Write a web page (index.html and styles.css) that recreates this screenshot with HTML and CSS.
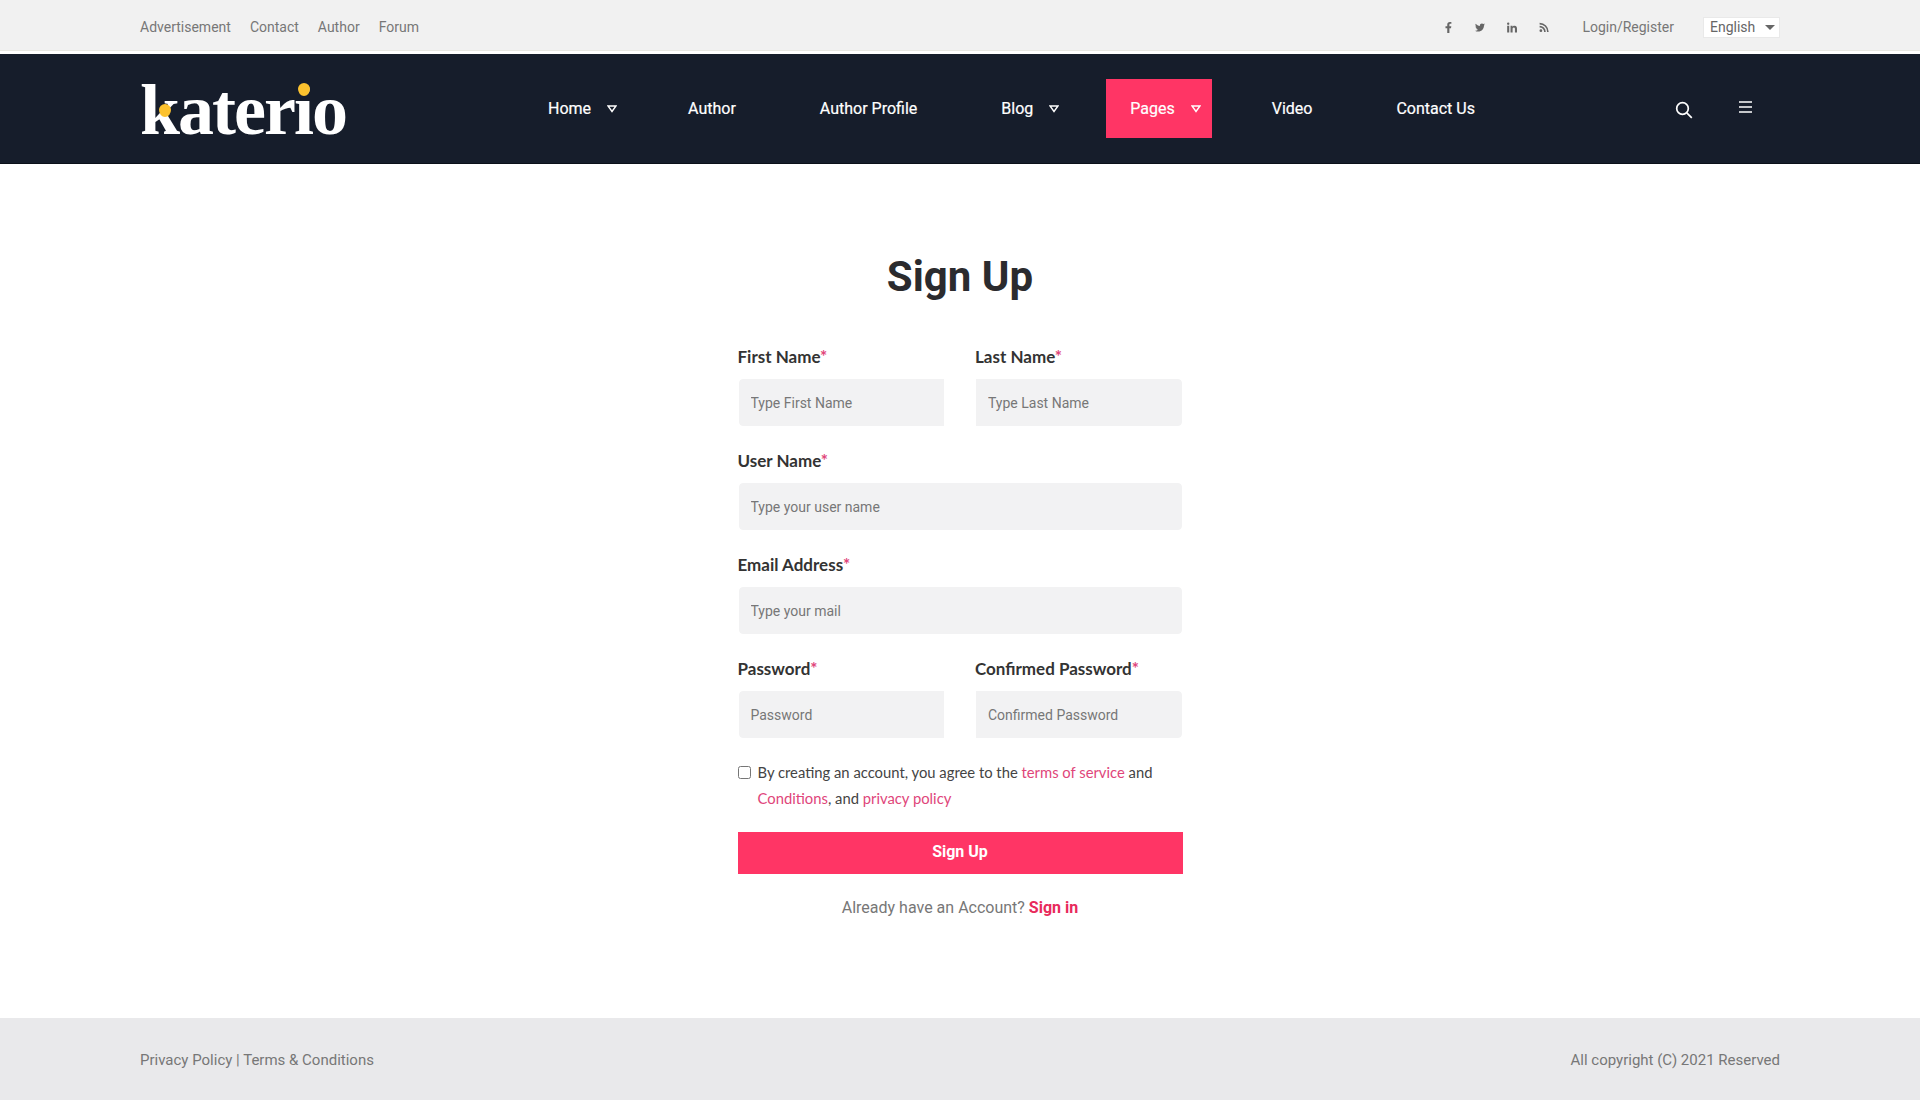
FILE: index.html
```html
<!DOCTYPE html>
<html>
<head>
	<meta charset="utf-8">
	<meta name="viewport" content="width=device-width, initial-scale=1">
	<title>Katerio - Sign Up</title>
	<link rel="stylesheet" href="styles.css">
</head>
<body>

	<div class="topbar">
		<div class="contenedor">
			<ul class="top-links">
				<li><a href="#">Advertisement</a></li>
				<li><a href="#">Contact</a></li>
				<li><a href="#">Author</a></li>
				<li><a href="#">Forum</a></li>
			</ul>
			<div class="top-right">
				<div class="social">
					<a href="#"><svg viewBox="0 0 320 512"><path d="M279.14 288l14.22-92.66h-88.91v-60.13c0-25.35 12.42-50.06 52.24-50.06h40.42V6.26S260.43 0 225.36 0c-73.22 0-121.08 44.38-121.08 124.72v70.62H22.89V288h81.39v224h100.17V288z"/></svg></a>
					<a href="#"><svg viewBox="0 0 512 512"><path d="M459.37 151.716c.325 4.548.325 9.097.325 13.645 0 138.72-105.583 298.558-298.558 298.558-59.452 0-114.68-17.219-161.137-47.106 8.447.974 16.568 1.299 25.34 1.299 49.055 0 94.213-16.568 130.274-44.832-46.132-.975-84.792-31.188-98.112-72.772 6.498.974 12.995 1.624 19.818 1.624 9.421 0 18.843-1.3 27.614-3.573-48.081-9.747-84.143-51.98-84.143-102.985v-1.299c13.969 7.797 30.214 12.67 47.431 13.319-28.264-18.843-46.781-51.005-46.781-87.391 0-19.492 5.197-37.36 14.294-52.954 51.655 63.675 129.3 105.258 216.365 109.807-1.624-7.797-2.599-15.918-2.599-24.04 0-57.828 46.782-104.934 104.934-104.934 30.213 0 57.502 12.67 76.67 33.137 23.715-4.548 46.456-13.32 66.599-25.34-7.798 24.366-24.366 44.833-46.132 57.827 21.117-2.273 41.584-8.122 60.426-16.243-14.292 20.791-32.161 39.308-52.628 54.253z"/></svg></a>
					<a href="#"><svg viewBox="0 0 448 448"><path d="M100.28 448H7.4V148.9h92.88zM53.79 108.1C24.09 108.1 0 83.5 0 53.8a53.79 53.79 0 0 1 107.58 0c0 29.7-24.1 54.3-53.79 54.3zM447.9 448h-92.68V302.4c0-34.7-.7-79.2-48.29-79.2-48.29 0-55.69 37.7-55.69 76.7V448h-92.78V148.9h89.08v40.8h1.3c12.4-23.5 42.69-48.3 87.88-48.3 94 0 111.28 61.9 111.28 142.3V448z"/></svg></a>
					<a href="#"><svg viewBox="0 0 16 16"><circle cx="3" cy="13" r="2.2"/><path d="M1 6.5c4.7 0 8.5 3.8 8.5 8.5M1 1.8c7.3 0 13.2 5.9 13.2 13.2" fill="none" stroke="#666" stroke-width="2.6"/></svg></a>
				</div>
				<a class="login" href="#">Login/Register</a>
				<div class="idioma">English<span class="idioma-flecha"></span></div>
			</div>
		</div>
	</div>

	<header class="menu">
		<div class="contenedor">
			<a class="logo" href="#">katerio<span class="pin pin-k"></span><span class="pin pin-i"></span></a>
			<nav class="nav">
				<a class="nav-item con-flecha" href="#">Home<svg class="flecha" viewBox="0 0 10 8"><path d="M1 1h8L5 6.5z"/></svg></a>
				<a class="nav-item" href="#">Author</a>
				<a class="nav-item" href="#">Author Profile</a>
				<a class="nav-item con-flecha" href="#">Blog<svg class="flecha" viewBox="0 0 10 8"><path d="M1 1h8L5 6.5z"/></svg></a>
				<a class="nav-item con-flecha activo" href="#">Pages<svg class="flecha" viewBox="0 0 10 8"><path d="M1 1h8L5 6.5z"/></svg></a>
				<a class="nav-item" href="#">Video</a>
				<a class="nav-item" href="#">Contact Us</a>
			</nav>
			<div class="nav-iconos">
				<a class="icono-buscar" href="#"><svg viewBox="0 0 18 18"><circle cx="7.5" cy="7.5" r="5.8"/><path d="M11.8 11.8l5 5"/></svg></a>
				<a class="icono-menu" href="#"><svg viewBox="0 0 13 12"><path d="M0 1h13M0 6h13M0 11h13"/></svg></a>
			</div>
		</div>
	</header>

	<main class="principal">
		<h1>Sign Up</h1>
		<form class="formulario">
			<div class="fila">
				<div class="campo">
					<label>First Name<span>*</span></label>
					<input class="izq" type="text" placeholder="Type First Name">
				</div>
				<div class="campo">
					<label>Last Name<span>*</span></label>
					<input class="der" type="text" placeholder="Type Last Name">
				</div>
			</div>
			<div class="campo">
				<label>User Name<span>*</span></label>
				<input type="text" placeholder="Type your user name">
			</div>
			<div class="campo">
				<label>Email Address<span>*</span></label>
				<input type="text" placeholder="Type your mail">
			</div>
			<div class="fila">
				<div class="campo">
					<label>Password<span>*</span></label>
					<input class="izq" type="text" placeholder="Password">
				</div>
				<div class="campo">
					<label>Confirmed Password<span>*</span></label>
					<input class="der" type="text" placeholder="Confirmed Password">
				</div>
			</div>
			<div class="terminos">
				<input type="checkbox">
				<p>By creating an account, you agree to the <a href="#">terms of service</a> and <a href="#">Conditions</a>, and <a href="#">privacy policy</a></p>
			</div>
			<button type="button">Sign Up</button>
			<div class="ya-cuenta">Already have an Account? <a href="#">Sign in</a></div>
		</form>
	</main>

	<footer class="pie">
		<div class="contenedor">
			<div><a href="#">Privacy Policy</a> | <a href="#">Terms &amp; Conditions</a></div>
			<div>All copyright (C) 2021 Reserved</div>
		</div>
	</footer>

</body>
</html>
```

FILE: styles.css
```css
*{
	box-sizing: border-box;
}
body{
	margin: 0;
	background: #fff;
	font-family: 'Roboto', sans-serif;
	color: #777;
}
a{
	color: inherit;
	text-decoration: none;
}
.contenedor{
	display: flex;
	align-items: center;
	width: 1640px;
	height: 100%;
	margin: 0 auto;
}

/*--------Barra superior-----------*/
.topbar{
	height: 54px;
	padding-top: 3px;
	background: #f1f1f1;
	border-bottom: 3px solid #fff;
	box-shadow: inset 0 -1px 0 #e8e8e2;
	font-size: 14px;
}
.top-links{
	display: flex;
	gap: 19px;
	margin: 0;
	padding: 0;
	list-style: none;
}
.top-right{
	display: flex;
	align-items: center;
	margin-left: auto;
}
.social{
	display: flex;
	align-items: center;
	gap: 22px;
	margin-right: 33px;
}
.social a{
	display: flex;
	justify-content: center;
	width: 10px;
}
.social svg{
	height: 11px;
	fill: #666;
}
.login{
	margin-right: 29px;
}
.idioma{
	display: flex;
	align-items: center;
	width: 77px;
	height: 21px;
	padding-left: 6px;
	background: #fff;
	border: 1px solid #e9e9e9;
	color: #666;
}
.idioma-flecha{
	width: 0;
	height: 0;
	margin-left: 10px;
	border-top: 5px solid #666;
	border-left: 5px solid transparent;
	border-right: 5px solid transparent;
}

/*--------Menu principal-----------*/
.menu{
	height: 110px;
	background: #161d2b;
	border-bottom: 1px solid #0b1019;
}
.logo{
	position: relative;
	width: 384px;
	margin-top: 2px;
	font-family: 'Liberation Serif', serif;
	font-size: 72px;
	font-weight: bold;
	line-height: 72px;
	letter-spacing: -2px;
	color: #fff;
}
.pin{
	position: absolute;
	width: 12px;
	height: 13px;
	background: #fcc22e;
	border-radius: 50% 50% 50% 50% / 45% 45% 55% 55%;
}
.pin-k{
	left: 19px;
	top: 30px;
}
.pin-i{
	left: 158px;
	top: 9px;
}
.nav{
	display: flex;
	align-items: center;
	gap: 36px;
}
.nav-item{
	display: flex;
	align-items: center;
	height: 59px;
	padding: 0 24px;
	font-size: 16px;
	font-weight: 400;
	color: #fff;
	-webkit-text-stroke: 0.2px #fff;
}
.con-flecha{
	padding-right: 11px;
}
.flecha{
	width: 10px;
	height: 8px;
	margin-left: 16px;
	fill: none;
	stroke: #fff;
	stroke-width: 1.4;
}
.activo{
	background: #ff3565;
}
.nav-iconos{
	display: flex;
	align-items: center;
	gap: 46px;
	margin-left: auto;
	margin-right: 28px;
}
.icono-buscar svg{
	display: block;
	width: 18px;
	height: 18px;
	margin-top: 3px;
	fill: none;
	stroke: #fff;
	stroke-width: 1.7;
}
.icono-menu svg{
	display: block;
	width: 13px;
	height: 12px;
	margin-bottom: 3px;
	fill: none;
	stroke: #fff;
	stroke-width: 1.6;
}

/*--------Formulario-----------*/
.principal{
	height: 854px;
	padding-top: 89px;
}
h1{
	margin: 0 0 44px;
	font-size: 42px;
	font-weight: 700;
	line-height: 48px;
	text-align: center;
	color: #2b2b2e;
}
.formulario{
	width: 445px;
	margin: 0 auto;
}
.fila{
	display: grid;
	grid-template-columns: 1fr 1fr;
	gap: 30px;
}
.campo{
	margin-bottom: 22px;
}
.campo label{
	display: block;
	margin-bottom: 9px;
	font-family: 'Lato', sans-serif;
	font-size: 17px;
	font-weight: 700;
	line-height: 24px;
	color: #333;
}
.campo label span{
	color: #e0457a;
}
.campo input{
	display: block;
	width: 100%;
	height: 49px;
	padding: 0 12px;
	background: #f2f2f3;
	background-clip: padding-box;
	border: 1px solid #fff;
	border-radius: 5px;
	font-family: 'Roboto', sans-serif;
	font-size: 14px;
}
.campo input.izq{
	border-radius: 5px 0 0 5px;
}
.campo input.der{
	border-radius: 0 5px 5px 0;
}
.campo input::placeholder{
	color: #777;
	opacity: 1;
}
.terminos{
	display: flex;
	margin-top: -2px;
	margin-bottom: 21px;
	font-family: 'Lato', sans-serif;
	font-size: 14.8px;
	line-height: 26px;
	color: #444;
}
.terminos input{
	flex-shrink: 0;
	width: 13px;
	height: 13px;
	margin: 7px 7px 0 0;
}
.terminos p{
	margin: 0;
}
.terminos a{
	color: #e0457a;
}
button{
	display: block;
	width: 445px;
	height: 42px;
	margin-bottom: 22px;
	padding-bottom: 4px;
	background: #ff3565;
	border: 0;
	font-family: 'Roboto', sans-serif;
	font-size: 16px;
	font-weight: 700;
	color: #fff;
}
.ya-cuenta{
	font-size: 16px;
	line-height: 24px;
	text-align: center;
}
.ya-cuenta a{
	font-weight: 700;
	color: #e8295b;
}

/*--------Pie-----------*/
.pie{
	height: 82px;
	padding-top: 1px;
	background: #e9e9eb;
	font-size: 15px;
}
.pie .contenedor{
	justify-content: space-between;
}
```
